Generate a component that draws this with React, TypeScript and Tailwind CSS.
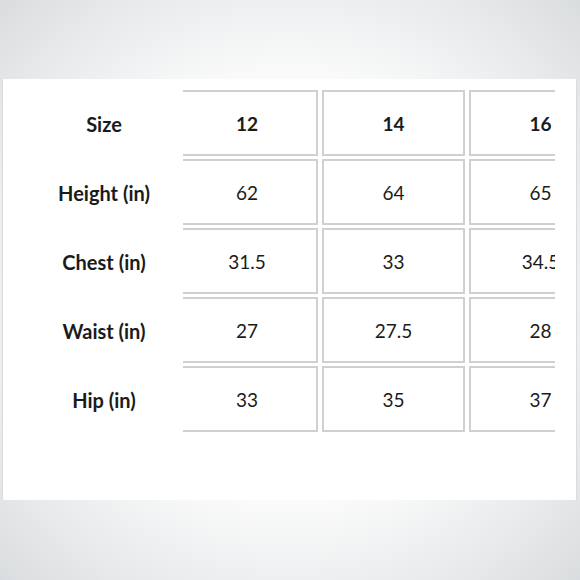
const rows: { label: string; values: string[]; bold?: boolean }[] = [
  { label: "Size", values: ["12", "14", "16"], bold: true },
  { label: "Height (in)", values: ["62", "64", "65"] },
  { label: "Chest (in)", values: ["31.5", "33", "34.5"] },
  { label: "Waist (in)", values: ["27", "27.5", "28"] },
  { label: "Hip (in)", values: ["33", "35", "37"] },
];

const cell = "h-[66px] shrink-0 flex items-center justify-center pt-[2px] border-y-2 border-[#cfd0d0]";

export default function App() {
  return (
    <div className="h-[580px] w-[580px] pt-[79px] bg-[radial-gradient(ellipse_at_center,#ffffff_45%,#dadddf_100%)] font-['Lato','Open_Sans',sans-serif] text-[19px] text-[#1b1b1b]">
      <div className="ml-[2px] w-[575px] h-[421px] bg-white border-x border-[#d9dbdc] pt-[11px]">
        <div className="flex flex-col gap-[3px]">
          {rows.map((r) => (
            <div key={r.label} className="flex">
              <div className="w-[180px] pl-[22px] pt-[2px] flex items-center justify-center font-bold text-[20px]">{r.label}</div>
              <div className="w-[372px] flex gap-[4px] overflow-hidden">
                <div className={`${cell} w-[135px] border-r-2 pr-[5px] ${r.bold ? "font-bold" : ""}`}>{r.values[0]}</div>
                <div className={`${cell} w-[143px] border-x-2 ${r.bold ? "font-bold" : ""}`}>{r.values[1]}</div>
                <div className={`${cell} w-[143px] border-x-2 ${r.bold ? "font-bold" : ""}`}>{r.values[2]}</div>
              </div>
            </div>
          ))}
        </div>
      </div>
    </div>
  );
}
